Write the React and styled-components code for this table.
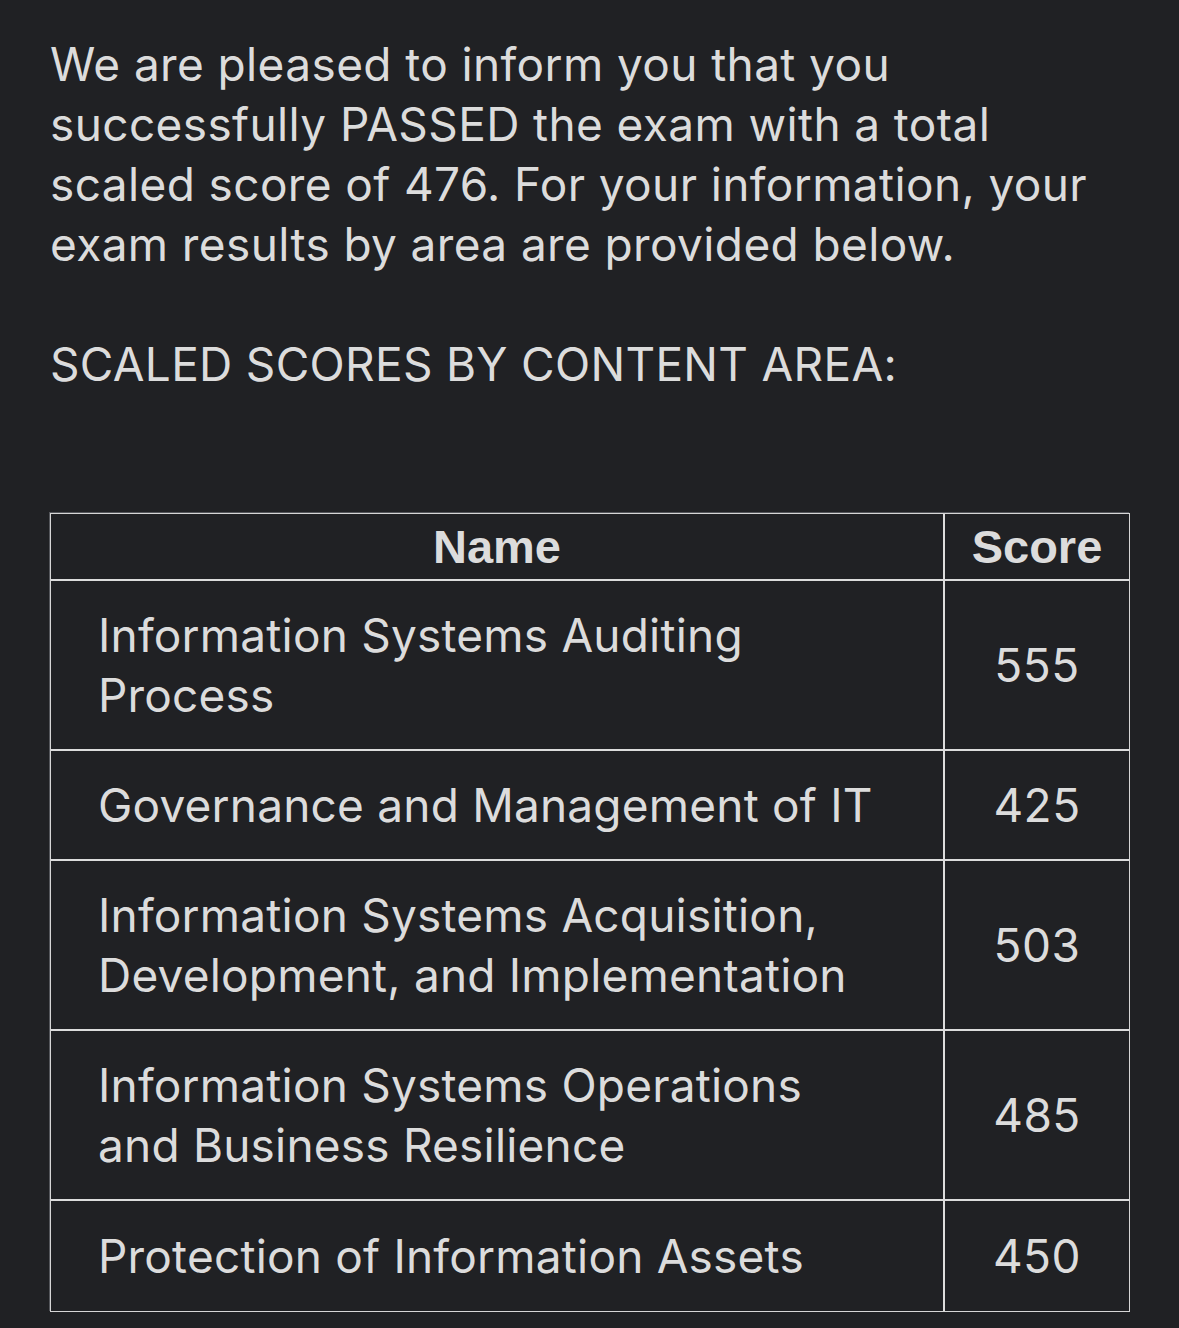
import React from "react";
import styled, { createGlobalStyle } from "styled-components";

const Global = createGlobalStyle`
  html, body { margin: 0; padding: 0; background: #202124; }
  body { font-family: Inter, "Noto Sans", sans-serif; color: #dcdcdc; }
`;

const Page = styled.div`
  width: 1179px;
  min-height: 1328px;
  box-sizing: border-box;
  padding: 34px 49px 0 50px;
  background: #202124;
`;

const Para = styled.p`
  margin: 0;
  font-size: 46px;
  line-height: 60px;
  letter-spacing: 0.38px;
`;

const Heading = styled.p`
  margin: 60px 0 0;
  font-size: 46px;
  line-height: 60px;
  letter-spacing: 0.3px;
`;

const Table = styled.table`
  margin-top: 119px;
  width: 1080px;
  border-collapse: separate;
  border-spacing: 0;
  border: 1px solid #d6d6d6;
  box-shadow: -1px -1px 0 #55575c;
`;

const Th = styled.th`
  height: 65px;
  padding: 0;
  font-family: "Liberation Sans", Arial, sans-serif;
  font-weight: 700;
  font-size: 47px;
  text-align: center;
  border-bottom: 2px solid #dcdcdc;
  border-right: ${(p) => (p.$last ? "0" : "2px solid #dcdcdc")};
  width: ${(p) => (p.$last ? "184px" : "auto")};
  color: #dcdcdc;
`;

const Td = styled.td`
  padding: ${(p) => (p.$end ? "25px 64px 25px 47px" : "24px 64px 24px 47px")};
  font-size: 46px;
  line-height: 60px;
  letter-spacing: 0.2px;
  border-bottom: ${(p) => (p.$end ? "0" : "2px solid #dcdcdc")};
  border-right: 2px solid #dcdcdc;
  vertical-align: middle;
`;

const ScoreTd = styled.td`
  padding: 0;
  font-size: 46px;
  text-align: center;
  letter-spacing: 0.5px;
  border-bottom: ${(p) => (p.$end ? "0" : "2px solid #dcdcdc")};
  vertical-align: middle;
`;

const rows = [
  ["Information Systems Auditing Process", "555"],
  ["Governance and Management of IT", "425"],
  ["Information Systems Acquisition, Development, and Implementation", "503"],
  ["Information Systems Operations and Business Resilience", "485"],
  ["Protection of Information Assets", "450"],
];

export default function App() {
  return (
    <Page>
      <Global />
      <Para>
        We are pleased to inform you that you successfully PASSED the exam with a total
        scaled score of 476. For your information, your exam results by area are provided
        below.
      </Para>
      <Heading>SCALED SCORES BY CONTENT AREA:</Heading>
      <Table>
        <thead>
          <tr>
            <Th>Name</Th>
            <Th $last>Score</Th>
          </tr>
        </thead>
        <tbody>
          {rows.map(([n, s], i) => (
            <tr key={n}>
              <Td $end={i === rows.length - 1}>{n}</Td>
              <ScoreTd $end={i === rows.length - 1}>{s}</ScoreTd>
            </tr>
          ))}
        </tbody>
      </Table>
    </Page>
  );
}
